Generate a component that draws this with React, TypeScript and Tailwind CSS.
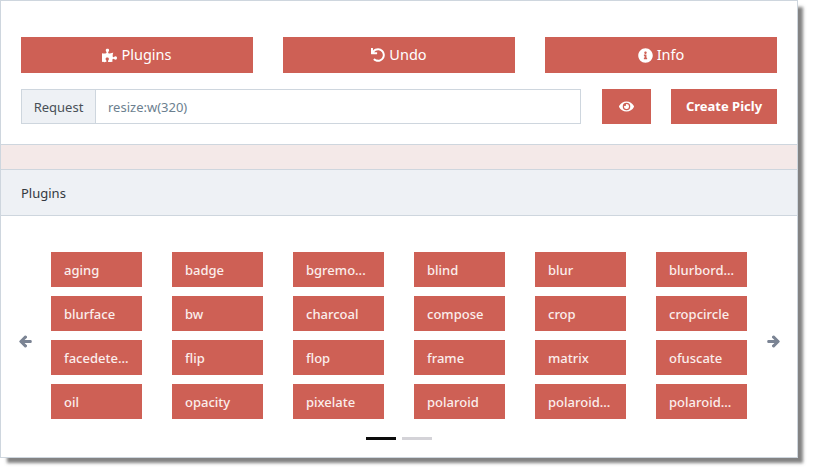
import { FaPuzzlePiece, FaUndo, FaInfoCircle, FaEye, FaArrowLeft, FaArrowRight } from "react-icons/fa";

const items = [
  "aging", "badge", "bgremo...", "blind", "blur", "blurbord...",
  "blurface", "bw", "charcoal", "compose", "crop", "cropcircle",
  "facedete...", "flip", "flop", "frame", "matrix", "ofuscate",
  "oil", "opacity", "pixelate", "polaroid", "polaroid...", "polaroid...",
];

function TopButton({ icon, label }: { icon: React.ReactNode; label: string }) {
  return (
    <div className="w-[232px] h-9 bg-[#ce6055] text-white text-[14.5px] flex items-center justify-center gap-1">
      {icon}
      <span>{label}</span>
    </div>
  );
}

export default function App() {
  return (
    <div className="w-[813px] h-[472px] bg-white font-['Noto_Sans','Open_Sans',sans-serif]">
      <div className="w-[798px] h-[458px] bg-white border border-[#ced6de] shadow-[6px_6px_3px_-1px_rgba(90,90,90,0.75)] flex flex-col">
        <div className="h-[143px] pt-9 pl-5 pr-5 shrink-0">
          <div className="flex gap-[30px]">
            <TopButton icon={<FaPuzzlePiece className="text-[15px]" />} label="Plugins" />
            <TopButton icon={<FaUndo className="text-[14px]" />} label="Undo" />
            <TopButton icon={<FaInfoCircle className="text-[15px]" />} label="Info" />
          </div>
          <div className="flex mt-4 h-[35px]">
            <div className="w-[560px] h-[35px] flex border border-[#ced6de] text-[13px]">
              <div className="w-[74px] bg-[#eef1f5] border-r border-[#ced6de] text-[#495057] flex items-center justify-center pt-[2px]">Request</div>
              <div className="flex-1 flex items-center pl-[12px] text-[#6c7f8f] pt-[2px]">resize:w(320)</div>
            </div>
            <div className="ml-[21px] w-[49px] bg-[#ce6055] text-white flex items-center justify-center">
              <FaEye className="text-[15px]" />
            </div>
            <div className="ml-5 w-[106px] bg-[#ce6055] text-white text-[13px] font-bold flex items-center justify-center">Create Picly</div>
          </div>
        </div>
        <div className="h-[25px] shrink-0 bg-[#f4e9e8] border-t border-[#ced6de]" />
        <div className="h-[47px] shrink-0 bg-[#eef1f5] border-y border-[#ced6de] flex items-center pl-5 pt-[2px] text-[13px] text-[#33393f]">Plugins</div>
        <div className="flex-1 relative">
          <div className="pt-9 pl-[50px] grid grid-cols-[repeat(6,91px)] gap-x-[30px] gap-y-[9px]">
            {items.map((t, i) => (
              <div key={i} className="h-[35px] bg-[#ce6055] text-[#fbeeec] text-[13px] font-medium flex items-center pl-[13px] pt-[2px]">{t}</div>
            ))}
          </div>
          <FaArrowLeft className="absolute left-[18px] top-[119px] text-[13px] text-[#7b8494] stroke-[40px]" />
          <FaArrowRight className="absolute left-[766px] top-[119px] text-[13px] text-[#7b8494] stroke-[40px]" />
          <div className="mt-[18px] ml-[365px] flex gap-[6px]">
            <div className="w-[30px] h-[3px] bg-[#0c0c0c]" />
            <div className="w-[30px] h-[3px] bg-[#d4d3d8]" />
          </div>
        </div>
      </div>
    </div>
  );
}
